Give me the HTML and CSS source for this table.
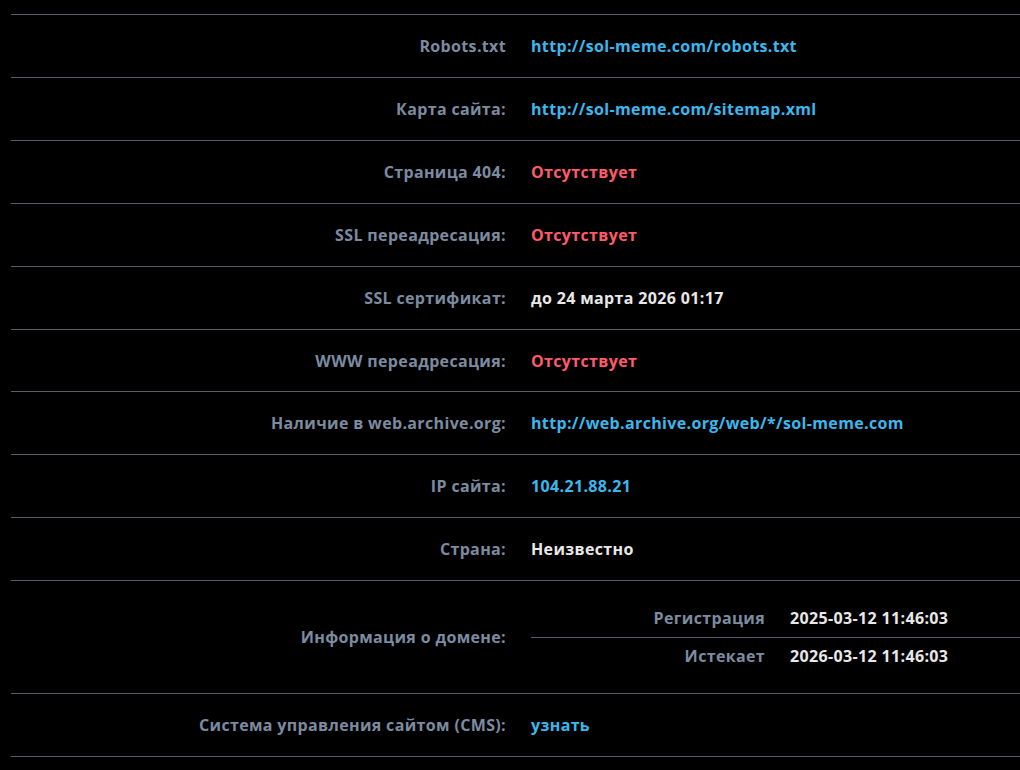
FILE: index.html
```html
<!DOCTYPE html>
<html lang="ru">
<head>
    <meta charset="UTF-8">
    <meta name="viewport" content="width=device-width, initial-scale=1.0">
    <link rel="stylesheet" href="styles.css">
</head>
<body>
    <div id="report">
        <table class="info-table">
            <tr>
                <td class="label">Robots.txt</td>
                <td class="value link">http://sol-meme.com/robots.txt</td>
            </tr>
            <tr>
                <td class="label">Карта сайта:</td>
                <td class="value link">http://sol-meme.com/sitemap.xml</td>
            </tr>
            <tr>
                <td class="label">Страница 404:</td>
                <td class="value bad">Отсутствует</td>
            </tr>
            <tr>
                <td class="label">SSL переадресация:</td>
                <td class="value bad">Отсутствует</td>
            </tr>
            <tr>
                <td class="label">SSL сертификат:</td>
                <td class="value">до 24 марта 2026 01:17</td>
            </tr>
            <tr>
                <td class="label">WWW переадресация:</td>
                <td class="value bad">Отсутствует</td>
            </tr>
            <tr>
                <td class="label">Наличие в web.archive.org:</td>
                <td class="value link">http://web.archive.org/web/*/sol-meme.com</td>
            </tr>
            <tr>
                <td class="label">IP сайта:</td>
                <td class="value link">104.21.88.21</td>
            </tr>
            <tr>
                <td class="label">Страна:</td>
                <td class="value">Неизвестно</td>
            </tr>
            <tr>
                <td class="label">Информация о домене:</td>
                <td class="value nested-cell">
                    <table class="domain-table">
                        <tr>
                            <td class="label">Регистрация</td>
                            <td class="value">2025-03-12 11:46:03</td>
                        </tr>
                        <tr>
                            <td class="label">Истекает</td>
                            <td class="value">2026-03-12 11:46:03</td>
                        </tr>
                    </table>
                </td>
            </tr>
            <tr>
                <td class="label">Система управления сайтом (CMS):</td>
                <td class="value link">узнать</td>
            </tr>
        </table>
    </div>
</body>
</html>
```

FILE: styles.css
```css
/* Global */
* {
    margin: 0;
    padding: 0;
    box-sizing: border-box;
}
body {
    font-family: "Open Sans", "Liberation Sans", sans-serif;
    background-color: #000;
    color: #e8e8e8;
    font-size: 16px;
    font-weight: 700;
    letter-spacing: 0.35px;
}

/* Report table */
#report {
    padding: 14px 0 0 11px;
}
.info-table {
    width: 100%;
    border-collapse: collapse;
    border-top: 1px solid #5a5e66;
}
.info-table > tbody > tr > td {
    border-bottom: 1px solid #5a5e66;
    padding: 23px 0 21px;
    line-height: 17.9px;
    vertical-align: middle;
}
.info-table > tbody > tr > .label {
    width: 509px;
    text-align: right;
    padding-right: 14px;
}
.info-table > tbody > tr > .value {
    padding-left: 11px;
}
.label {
    color: #7d8ba0;
}
.link {
    color: #3ab8ee;
}
.bad {
    color: #ff5a6a;
}

/* Domain info */
.info-table > tbody > tr > .nested-cell {
    padding: 19px 0 18px 11px;
}
.domain-table {
    width: 100%;
    border-collapse: collapse;
}
.domain-table td {
    padding: 9px 0 10px;
    line-height: 18px;
}
.domain-table tr:first-child td {
    border-bottom: 1px solid #5a5e66;
}
.domain-table .label {
    width: 247px;
    text-align: right;
    padding-right: 13px;
}
.domain-table .value {
    padding-left: 12px;
}
```
